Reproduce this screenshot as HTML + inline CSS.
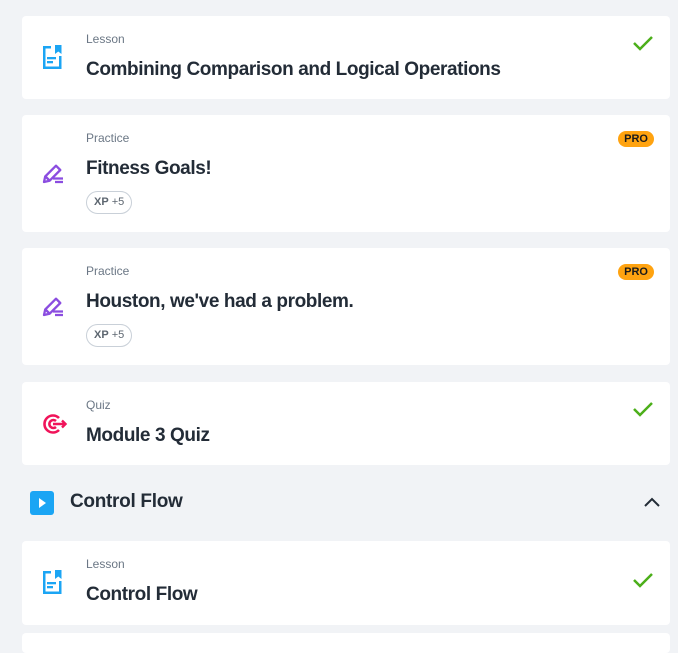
<!DOCTYPE html>
<html><head><style>
body{margin:0;width:678px;height:640px;background:#f1f3f6;font-family:"Liberation Sans",sans-serif;overflow:hidden;position:relative}
.card{position:absolute;left:22px;width:648px;background:#fff;border-radius:4px}
.lbl{position:absolute;left:64px;font-size:12px;color:#6b7785}
.ttl{position:absolute;left:64px;font-size:19px;font-weight:bold;color:#232c37;letter-spacing:-0.4px}
.ic{position:absolute;left:20px}
.chk{position:absolute;right:16px}
.pro{position:absolute;right:16px;background:#ffa310;color:#1a1a1a;font-size:11px;font-weight:bold;padding:1px 6px;border-radius:8px;line-height:14px}
.xp{position:absolute;left:64px;border:1px solid #c9d0d8;border-radius:12px;font-size:11px;color:#5d6670;padding:0 7px;height:21px;line-height:21px}
</style></head><body>

<div class="card" style="top:16px;height:83px">
<svg class="ic" style="top:28px" width="22" height="26" viewBox="0 0 22 26"><path d="M1 2h8v2.5H3.5v18H17V12h2.5v13H1z" fill="#1ba5f4"/><path d="M13 1h6.5v9l-3.2-2.5L13 10z" fill="#1ba5f4"/><rect x="5" y="13" width="9" height="2.3" fill="#1ba5f4"/><rect x="5" y="17" width="6" height="2.3" fill="#1ba5f4"/></svg>
<div class="lbl" style="top:16px">Lesson</div>
<div class="ttl" style="top:43px">Combining Comparison and Logical Operations</div>
<svg class="chk" style="top:17px" width="22" height="20"><path d="M2 10l6 6L20 4" fill="none" stroke="#4caf1a" stroke-width="2.5"/></svg>
</div>

<div class="card" style="top:115px;height:117px">
<svg class="ic" style="top:47px" width="22" height="22" viewBox="0 0 22 22"><path d="M2 20l1.2-5.5L14 3.7l4.3 4.3L7.5 18.8zM4 15l3 3" fill="none" stroke="#8b4de0" stroke-width="2.3" stroke-linejoin="round"/><path d="M11 16.5h10M13 20h8" stroke="#8b4de0" stroke-width="2.3"/></svg>
<div class="lbl" style="top:16px">Practice</div>
<div class="ttl" style="top:43px">Fitness Goals!</div>
<div class="xp" style="top:76px"><b>XP</b> +5</div>
<div class="pro" style="top:16px">PRO</div>
</div>

<div class="card" style="top:248px;height:117px">
<svg class="ic" style="top:47px" width="22" height="22" viewBox="0 0 22 22"><path d="M2 20l1.2-5.5L14 3.7l4.3 4.3L7.5 18.8zM4 15l3 3" fill="none" stroke="#8b4de0" stroke-width="2.3" stroke-linejoin="round"/><path d="M11 16.5h10M13 20h8" stroke="#8b4de0" stroke-width="2.3"/></svg>
<div class="lbl" style="top:16px">Practice</div>
<div class="ttl" style="top:43px">Houston, we've had a problem.</div>
<div class="xp" style="top:76px"><b>XP</b> +5</div>
<div class="pro" style="top:16px">PRO</div>
</div>

<div class="card" style="top:382px;height:83px">
<svg class="ic" style="top:30px" width="26" height="24" viewBox="0 0 26 24"><path d="M17 6A8.5 8.5 0 1 0 17 18" fill="none" stroke="#f0145a" stroke-width="2.6"/><path d="M14 9A4 4 0 1 0 14 15" fill="none" stroke="#f0145a" stroke-width="2.6"/><path d="M11 12h13M20 8.5l3.5 3.5-3.5 3.5" stroke="#f0145a" stroke-width="2.4" fill="none"/></svg>
<div class="lbl" style="top:16px">Quiz</div>
<div class="ttl" style="top:43px">Module 3 Quiz</div>
<svg class="chk" style="top:17px" width="22" height="20"><path d="M2 10l6 6L20 4" fill="none" stroke="#4caf1a" stroke-width="2.5"/></svg>
</div>

<div style="position:absolute;left:30px;top:491px;width:24px;height:24px;background:#1ba5f4;border-radius:3px"><svg width="24" height="24"><path d="M9 7l7 5-7 5z" fill="#fff"/></svg></div>
<div style="position:absolute;left:70px;top:491px;font-size:19px;color:#232c37;font-weight:bold;letter-spacing:-0.3px">Control Flow</div>
<svg style="position:absolute;left:643px;top:495px" width="18" height="14"><path d="M2 11l7-7 7 7" fill="none" stroke="#232c37" stroke-width="2"/></svg>

<div class="card" style="top:541px;height:84px">
<svg class="ic" style="top:28px" width="22" height="26" viewBox="0 0 22 26"><path d="M1 2h8v2.5H3.5v18H17V12h2.5v13H1z" fill="#1ba5f4"/><path d="M13 1h6.5v9l-3.2-2.5L13 10z" fill="#1ba5f4"/><rect x="5" y="13" width="9" height="2.3" fill="#1ba5f4"/><rect x="5" y="17" width="6" height="2.3" fill="#1ba5f4"/></svg>
<div class="lbl" style="top:16px">Lesson</div>
<div class="ttl" style="top:43px">Control Flow</div>
<svg class="chk" style="top:29px" width="22" height="20"><path d="M2 10l6 6L20 4" fill="none" stroke="#4caf1a" stroke-width="2.5"/></svg>
</div>
<div class="card" style="top:633px;height:20px"></div>
</body></html>
